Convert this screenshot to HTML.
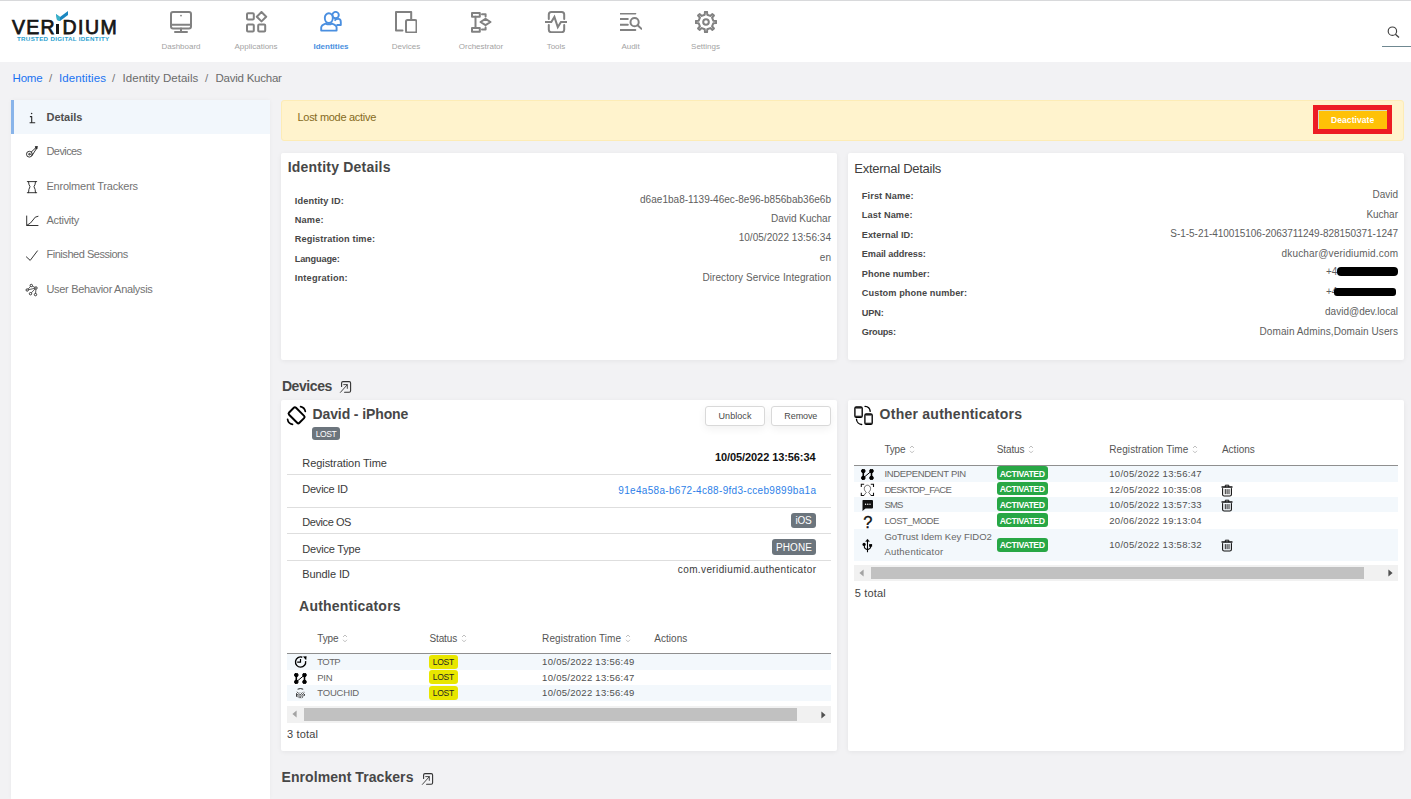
<!DOCTYPE html>
<html><head><meta charset="utf-8"><style>
*{margin:0;padding:0;box-sizing:border-box}
html,body{width:1411px;height:799px;overflow:hidden}
body{position:relative;background:#f2f2f4;font-family:"Liberation Sans", sans-serif}
.a{position:absolute}
.t{white-space:nowrap}
</style></head><body>
<div class="a" style="left:0px;top:0px;width:1411px;height:62px;background:#fff;"></div>
<div class="a" style="left:0px;top:0px;width:1411px;height:1px;background:#d8d9db;"></div>
<div id="t0" class="a t" style="top:18.49px;font-size:19.5px;line-height:19.5px;font-weight:400;color:#161616;left:12px;letter-spacing:1.3px;-webkit-text-stroke:0.75px #161616;">VER</div>
<div class="a" style="left:56.2px;top:23.5px;width:2.6px;height:10.5px;background:#161616"></div>
<div id="t1" class="a t" style="top:18.49px;font-size:19.5px;line-height:19.5px;font-weight:400;color:#161616;left:62.5px;letter-spacing:1.5px;-webkit-text-stroke:0.75px #161616;">DIUM</div>
<svg class="a" style="left:55px;top:11px;" width="14" height="11" viewBox="0 0 14 11"><path d="M1 3 L2 9 L5 10 L13 4 L13 0 L5 6 Z" fill="#1a86c0"/><path d="M1 3 L5 6 L5 10 L2 9Z" fill="#3ab2c8"/></svg>
<div id="t2" class="a t" style="top:35.75px;font-size:6.2px;line-height:6.2px;font-weight:700;color:#2a9fd0;letter-spacing:0.311px;left:17px;">TRUSTED DIGITAL IDENTITY</div>
<div id="t3" class="a t" style="top:42.73px;font-size:8px;line-height:8px;font-weight:400;color:#a3a3a3;left:181px;transform:translateX(-50%);">Dashboard</div>
<div id="t4" class="a t" style="top:42.73px;font-size:8px;line-height:8px;font-weight:400;color:#a3a3a3;left:256px;transform:translateX(-50%);">Applications</div>
<div id="t5" class="a t" style="top:42.73px;font-size:8px;line-height:8px;font-weight:700;color:#4a8fe0;left:331px;transform:translateX(-50%);">Identities</div>
<div id="t6" class="a t" style="top:42.73px;font-size:8px;line-height:8px;font-weight:400;color:#a3a3a3;left:406px;transform:translateX(-50%);">Devices</div>
<div id="t7" class="a t" style="top:42.73px;font-size:8px;line-height:8px;font-weight:400;color:#a3a3a3;left:481px;transform:translateX(-50%);">Orchestrator</div>
<div id="t8" class="a t" style="top:42.73px;font-size:8px;line-height:8px;font-weight:400;color:#a3a3a3;left:556px;transform:translateX(-50%);">Tools</div>
<div id="t9" class="a t" style="top:42.73px;font-size:8px;line-height:8px;font-weight:400;color:#a3a3a3;left:630.5px;transform:translateX(-50%);">Audit</div>
<div id="t10" class="a t" style="top:42.73px;font-size:8px;line-height:8px;font-weight:400;color:#a3a3a3;left:705.5px;transform:translateX(-50%);">Settings</div>
<svg class="a" style="left:170px;top:11px;" width="22" height="22" viewBox="0 0 22 22"><g fill="none" stroke="#818181" stroke-width="2" stroke-linecap="round" stroke-linejoin="round"><rect x="1" y="1" width="20" height="16.5" rx="2"/><path d="M1 13.8H21M11 17.5V20.5M5 21H17"/></g><circle cx="11" cy="4.6" r="0.9" fill="#818181"/></svg>
<svg class="a" style="left:246px;top:11px;" width="22" height="22" viewBox="0 0 22 22"><g fill="none" stroke="#818181" stroke-width="2" stroke-linecap="round" stroke-linejoin="round"><rect x="1" y="2.2" width="6.8" height="6.4" rx="1"/><rect x="1" y="13.4" width="6.8" height="7.2" rx="1"/><rect x="12.2" y="13.4" width="7" height="7.2" rx="1"/><path d="M15.5 1 L20.2 5.7 L15.5 10.4 L10.8 5.7Z"/></g></svg>
<svg class="a" style="left:320px;top:11px;" width="22" height="22" viewBox="0 0 22 22"><g fill="#fff" stroke="#4a8fe0" stroke-width="1.9" stroke-linejoin="round"><circle cx="15.6" cy="4.1" r="3.2"/><path d="M14.5 9.6 C15.5 8.4 17 7.9 18.3 7.9 C20 7.9 20.8 9.3 20.8 11 V14 H16.5"/><ellipse cx="8.8" cy="7.1" rx="4" ry="4.9"/><path d="M1.2 19.6 V16.6 C1.2 14.6 3.2 13.4 5.6 12.6 Q8.8 14.2 12 12.6 C14.6 13.4 16.6 14.6 16.6 16.6 V19.6 Z"/></g></svg>
<svg class="a" style="left:395px;top:11px;" width="22" height="22" viewBox="0 0 22 22"><g fill="none" stroke="#818181" stroke-width="2" stroke-linecap="round" stroke-linejoin="round" stroke-linecap="butt" stroke-width="1.9"><path d="M7.5 19.5 H1 V1 H16.2 V8.3"/><rect x="11" y="9" width="10.5" height="12.5" rx="1.5"/></g></svg>
<svg class="a" style="left:471px;top:12px;" width="22" height="22" viewBox="0 0 22 22"><g fill="none" stroke="#818181" stroke-width="2" stroke-linecap="round" stroke-linejoin="round" stroke-width="1.8" stroke-linecap="butt" stroke-linejoin="miter"><rect x="1" y="1" width="7.8" height="3.8"/><rect x="1" y="16" width="7.8" height="3.8"/><path d="M4.5 4.8V16M9.5 10 L14.5 6.8 L19.5 10 L14.5 13.2Z M11 2.3H14.6V4.6 M14.6 15.4V17.6H11"/></g></svg>
<svg class="a" style="left:545px;top:11px;" width="22" height="22" viewBox="0 0 22 22"><g fill="none" stroke="#818181" stroke-width="2" stroke-linecap="round" stroke-linejoin="round" stroke-width="1.9" stroke-linecap="butt"><path d="M3.8 8 V3.5 Q3.8 1 6.3 1 H16.7 Q19.2 1 19.2 3.5 V8 M3.8 14 V18.8 Q3.8 21.2 6.3 21.2 H16.7 Q19.2 21.2 19.2 18.8 V14"/><path d="M0 11 H6.3 L9.4 5.9 L12.8 16.1 L16 11 H22" stroke-linejoin="miter"/></g></svg>
<svg class="a" style="left:620px;top:13px;" width="22" height="20" viewBox="0 0 22 20"><g fill="none" stroke="#818181" stroke-width="2" stroke-linecap="round" stroke-linejoin="round" stroke-width="1.8" stroke-linecap="butt"><path d="M0 0.6H15.3M0 6H7.8M0 11.7H7.8M0 17.1H15.3"/><circle cx="14.6" cy="9.2" r="4.1"/><path d="M17.6 12.2 L21.5 15.8"/></g></svg>
<svg class="a" style="left:695px;top:11px;" width="22" height="22" viewBox="0 0 22 22"><g fill="none" stroke="#818181" stroke-width="2" stroke-linecap="round" stroke-linejoin="round" stroke-width="1.65" stroke-linejoin="round"><path d="M18.29 9.73 L21.15 9.96 L21.15 12.04 L18.29 12.27 L17.05 15.26 L18.91 17.44 L17.44 18.91 L15.26 17.05 L12.27 18.29 L12.04 21.15 L9.96 21.15 L9.73 18.29 L6.74 17.05 L4.56 18.91 L3.09 17.44 L4.95 15.26 L3.71 12.27 L0.85 12.04 L0.85 9.96 L3.71 9.73 L4.95 6.74 L3.09 4.56 L4.56 3.09 L6.74 4.95 L9.73 3.71 L9.96 0.85 L12.04 0.85 L12.27 3.71 L15.26 4.95 L17.44 3.09 L18.91 4.56 L17.05 6.74Z"/><circle cx="11" cy="11" r="2.8"/></g></svg>
<svg class="a" style="left:1386px;top:25px;" width="15" height="14" viewBox="0 0 15 14"><g fill="none" stroke="#404040" stroke-width="1.15"><circle cx="6.4" cy="6.2" r="4.2"/><path d="M9.4 9.3 L13 12.6" stroke-width="1.3"/></g></svg>
<div class="a" style="left:1382px;top:46px;width:29px;height:1.2px;background:#6f8891;"></div>
<div id="t11" class="a t" style="top:73.27px;font-size:11.5px;line-height:11.5px;font-weight:400;color:#1a72f2;letter-spacing:-0.172px;left:12.5px;">Home</div>
<div id="t12" class="a t" style="top:73.27px;font-size:11.5px;line-height:11.5px;font-weight:400;color:#777;left:49px;">/</div>
<div id="t13" class="a t" style="top:73.27px;font-size:11.5px;line-height:11.5px;font-weight:400;color:#1a72f2;letter-spacing:0.097px;left:59px;">Identities</div>
<div id="t14" class="a t" style="top:73.27px;font-size:11.5px;line-height:11.5px;font-weight:400;color:#777;left:112px;">/</div>
<div id="t15" class="a t" style="top:73.27px;font-size:11.5px;line-height:11.5px;font-weight:400;color:#6b6b6b;letter-spacing:0.016px;left:122.6px;">Identity Details</div>
<div id="t16" class="a t" style="top:73.27px;font-size:11.5px;line-height:11.5px;font-weight:400;color:#777;left:205px;">/</div>
<div id="t17" class="a t" style="top:73.27px;font-size:11.5px;line-height:11.5px;font-weight:400;color:#6b6b6b;letter-spacing:-0.237px;left:215.5px;">David Kuchar</div>
<div class="a" style="left:11px;top:100px;width:259px;height:699px;background:#fff;box-shadow:0 0 4px rgba(0,0,0,0.04);"></div>
<div class="a" style="left:11px;top:100px;width:259px;height:34px;background:#f2f7fc;"></div>
<div class="a" style="left:11px;top:100px;width:3px;height:34px;background:#88b4ea;"></div>
<div id="t18" class="a t" style="top:111.79px;font-size:11px;line-height:11px;font-weight:700;color:#4f4f4f;letter-spacing:-0.054px;left:46.5px;">Details</div>
<div id="t19" class="a t" style="top:145.89px;font-size:11px;line-height:11px;font-weight:400;color:#737373;letter-spacing:-0.589px;left:46.5px;">Devices</div>
<div id="t20" class="a t" style="top:180.69px;font-size:11px;line-height:11px;font-weight:400;color:#737373;letter-spacing:-0.221px;left:46.5px;">Enrolment Trackers</div>
<div id="t21" class="a t" style="top:215.09px;font-size:11px;line-height:11px;font-weight:400;color:#737373;letter-spacing:-0.293px;left:46.5px;">Activity</div>
<div id="t22" class="a t" style="top:249.49px;font-size:11px;line-height:11px;font-weight:400;color:#737373;letter-spacing:-0.469px;left:46.5px;">Finished Sessions</div>
<div id="t23" class="a t" style="top:283.69px;font-size:11px;line-height:11px;font-weight:400;color:#737373;letter-spacing:-0.323px;left:46.5px;">User Behavior Analysis</div>
<svg class="a" style="left:0px;top:0px;" width="45" height="300" viewBox="0 0 45 300"><g fill="none" stroke="#2a2a2a" stroke-width="0.95" stroke-linecap="round" stroke-linejoin="round">
<path d="M29.9 116.6 H31.7 V122.6 M29.6 122.7 H35.2" stroke-width="1.1" stroke-linecap="butt"/>
<circle cx="29.4" cy="154.2" r="2.9"/><circle cx="29.4" cy="154.2" r="0.8"/>
<path d="M31.3 152 L35.2 148.3 M32 155.6 L35.9 149.5"/>
<path d="M27.3 181.6 H36.7 M27.3 192.7 H36.7 M28.5 181.6 Q28.5 184.5 30 186.7 Q28.5 189 28.5 192.7 M35.5 181.6 Q35.5 184.5 34 186.7 Q35.5 189 35.5 192.7"/>
<path d="M26.7 216 V225.5 H38 M26.9 225.3 Q31 223.5 33 220 Q34.8 216.2 38 216.2"/>
<path d="M26.4 256.9 L30.2 260.4 L37.4 250.9"/>
<path d="M27.3 290 L36 288 M31.3 285.5 L36 288 M30.5 293.7 L36 288 M35.5 294.6 L36 288 M27.3 290 L31.3 285.5" stroke-width="0.75"/>
</g>
<circle cx="31.6" cy="113.4" r="0.75" fill="#2a2a2a"/>
<path d="M34.8 146.2 L37.8 146.1 L37.4 149 L35.6 149.6Z" fill="#2a2a2a"/>
<g fill="#fff" stroke="#2a2a2a" stroke-width="0.9"><circle cx="31.3" cy="285.5" r="1.2"/><circle cx="27.2" cy="290" r="1.2"/><circle cx="30.5" cy="293.7" r="1.2"/><circle cx="36" cy="288" r="1.2"/><circle cx="35.5" cy="294.6" r="1.2"/></g></svg>
<div class="a" style="left:281px;top:100px;width:1123px;height:40.5px;background:#fff3cd;border:1px solid #fdecb6;border-radius:3px;"></div>
<div id="t24" class="a t" style="top:111.69px;font-size:11px;line-height:11px;font-weight:400;color:#856a1c;letter-spacing:-0.291px;left:297.5px;">Lost mode active</div>
<div class="a" style="left:1313px;top:105px;width:79px;height:29px;background:#ed1c24;"></div>
<div class="a" style="left:1318px;top:110px;width:69px;height:19px;background:#ffc107;border-top:1px solid #d8d8c8;border-left:1px solid #d8d8c8;"></div>
<div id="t25" class="a t" style="top:115.80px;font-size:8.5px;line-height:8.5px;font-weight:700;color:#fff;letter-spacing:0.077px;left:1352.7px;transform:translateX(-50%);">Deactivate</div>
<div class="a" style="left:281px;top:153px;width:556px;height:207px;background:#fff;border-radius:2px;box-shadow:0 1px 5px rgba(0,0,0,0.06);"></div>
<div class="a" style="left:848px;top:153px;width:556px;height:207px;background:#fff;border-radius:2px;box-shadow:0 1px 5px rgba(0,0,0,0.06);"></div>
<div id="t26" class="a t" style="top:160.15px;font-size:14px;line-height:14px;font-weight:700;color:#474747;letter-spacing:0.213px;left:287.7px;">Identity Details</div>
<div id="t27" class="a t" style="top:196.61px;font-size:9.2px;line-height:9.2px;font-weight:700;color:#474747;letter-spacing:0.153px;left:294.7px;">Identity ID:</div>
<div id="t28" class="a t" style="top:216.31px;font-size:9.2px;line-height:9.2px;font-weight:700;color:#474747;letter-spacing:0.221px;left:294.7px;">Name:</div>
<div id="t29" class="a t" style="top:235.11px;font-size:9.2px;line-height:9.2px;font-weight:700;color:#474747;letter-spacing:0.127px;left:294.7px;">Registration time:</div>
<div id="t30" class="a t" style="top:255.31px;font-size:9.2px;line-height:9.2px;font-weight:700;color:#474747;letter-spacing:-0.161px;left:294.7px;">Language:</div>
<div id="t31" class="a t" style="top:274.11px;font-size:9.2px;line-height:9.2px;font-weight:700;color:#474747;letter-spacing:0.222px;left:294.7px;">Integration:</div>
<div id="t32" class="a t" style="top:194.53px;font-size:10px;line-height:10px;font-weight:400;color:#5e5e5e;letter-spacing:0.028px;right:579.97px;">d6ae1ba8-1139-46ec-8e96-b856bab36e6b</div>
<div id="t33" class="a t" style="top:213.53px;font-size:10px;line-height:10px;font-weight:400;color:#5e5e5e;letter-spacing:-0.003px;right:580.00px;">David Kuchar</div>
<div id="t34" class="a t" style="top:233.34px;font-size:10px;line-height:10px;font-weight:400;color:#5e5e5e;letter-spacing:0.033px;right:579.97px;">10/05/2022 13:56:34</div>
<div id="t35" class="a t" style="top:252.53px;font-size:10px;line-height:10px;font-weight:400;color:#5e5e5e;letter-spacing:0.088px;right:579.91px;">en</div>
<div id="t36" class="a t" style="top:272.54px;font-size:10px;line-height:10px;font-weight:400;color:#5e5e5e;letter-spacing:0.087px;right:579.91px;">Directory Service Integration</div>
<div id="t37" class="a t" style="top:161.50px;font-size:13px;line-height:13px;font-weight:400;color:#404040;letter-spacing:-0.272px;left:854.3px;">External Details</div>
<div id="t38" class="a t" style="top:192.31px;font-size:9.2px;line-height:9.2px;font-weight:700;color:#474747;letter-spacing:0.114px;left:861.8px;">First Name:</div>
<div id="t39" class="a t" style="top:211.11px;font-size:9.2px;line-height:9.2px;font-weight:700;color:#474747;letter-spacing:0.127px;left:861.8px;">Last Name:</div>
<div id="t40" class="a t" style="top:231.11px;font-size:9.2px;line-height:9.2px;font-weight:700;color:#474747;letter-spacing:0.045px;left:861.8px;">External ID:</div>
<div id="t41" class="a t" style="top:250.11px;font-size:9.2px;line-height:9.2px;font-weight:700;color:#474747;letter-spacing:-0.098px;left:861.8px;">Email address:</div>
<div id="t42" class="a t" style="top:270.11px;font-size:9.2px;line-height:9.2px;font-weight:700;color:#474747;letter-spacing:0.047px;left:861.8px;">Phone number:</div>
<div id="t43" class="a t" style="top:289.31px;font-size:9.2px;line-height:9.2px;font-weight:700;color:#474747;letter-spacing:0.089px;left:861.8px;">Custom phone number:</div>
<div id="t44" class="a t" style="top:308.81px;font-size:9.2px;line-height:9.2px;font-weight:700;color:#474747;letter-spacing:-0.117px;left:861.8px;">UPN:</div>
<div id="t45" class="a t" style="top:328.11px;font-size:9.2px;line-height:9.2px;font-weight:700;color:#474747;letter-spacing:-0.248px;left:861.8px;">Groups:</div>
<div id="t46" class="a t" style="top:189.53px;font-size:10px;line-height:10px;font-weight:400;color:#5e5e5e;letter-spacing:0.004px;right:13.00px;">David</div>
<div id="t47" class="a t" style="top:209.53px;font-size:10px;line-height:10px;font-weight:400;color:#5e5e5e;letter-spacing:-0.015px;right:13.01px;">Kuchar</div>
<div id="t48" class="a t" style="top:228.94px;font-size:10px;line-height:10px;font-weight:400;color:#5e5e5e;letter-spacing:-0.042px;right:13.04px;">S-1-5-21-410015106-2063711249-828150371-1247</div>
<div id="t49" class="a t" style="top:248.53px;font-size:10px;line-height:10px;font-weight:400;color:#5e5e5e;letter-spacing:0.165px;right:12.83px;">dkuchar@veridiumid.com</div>
<div id="t50" class="a t" style="top:306.54px;font-size:10px;line-height:10px;font-weight:400;color:#5e5e5e;letter-spacing:0.014px;right:12.99px;">david@dev.local</div>
<div id="t51" class="a t" style="top:326.54px;font-size:10px;line-height:10px;font-weight:400;color:#5e5e5e;letter-spacing:0.093px;right:12.91px;">Domain Admins,Domain Users</div>
<div id="t52" class="a t" style="top:266.54px;font-size:10px;line-height:10px;font-weight:400;color:#5e5e5e;left:1326px;">+4</div>
<div id="t53" class="a t" style="top:287.14px;font-size:10px;line-height:10px;font-weight:400;color:#5e5e5e;left:1326px;">+4</div>
<div class="a" style="left:1337px;top:267.4px;width:61px;height:8.6px;background:#000;border-radius:4px;"></div>
<div class="a" style="left:1334px;top:288.4px;width:62px;height:8px;background:#000;border-radius:3px;"></div>
<div id="t54" class="a t" style="top:378.75px;font-size:14px;line-height:14px;font-weight:700;color:#474747;letter-spacing:-0.420px;left:281.9px;">Devices</div>
<svg class="a" style="left:335px;top:376px;" width="20" height="20" viewBox="0 0 20 20"><g fill="none" stroke="#333" stroke-linecap="round"><path d="M6.6 10.4 V7 Q6.6 5.6 8 5.6 H14.2 Q15.6 5.6 15.6 7 V14.8 Q15.6 16.2 14.2 16.2 H9.6" stroke-width="1.1"/><path d="M5.4 16.4 L12.2 8.8 M8.7 8.6 H12.3 V12.4" stroke-width="0.9"/></g></svg>
<div id="t55" class="a t" style="top:769.75px;font-size:14px;line-height:14px;font-weight:700;color:#474747;letter-spacing:0.070px;left:281.5px;">Enrolment Trackers</div>
<svg class="a" style="left:417px;top:768px;" width="20" height="20" viewBox="0 0 20 20"><g fill="none" stroke="#333" stroke-linecap="round"><path d="M6.6 10.4 V7 Q6.6 5.6 8 5.6 H14.2 Q15.6 5.6 15.6 7 V14.8 Q15.6 16.2 14.2 16.2 H9.6" stroke-width="1.1"/><path d="M5.4 16.4 L12.2 8.8 M8.7 8.6 H12.3 V12.4" stroke-width="0.9"/></g></svg>
<div class="a" style="left:281px;top:400px;width:556px;height:351px;background:#fff;border-radius:2px;box-shadow:0 1px 5px rgba(0,0,0,0.06);"></div>
<svg class="a" style="left:284px;top:402px;" width="26" height="26" viewBox="0 0 26 26"><g fill="none" stroke="#000" stroke-width="1.7" stroke-linecap="round"><rect x="-4.9" y="-7.3" width="9.8" height="14.6" rx="1.6" stroke-width="1.95" transform="translate(12.6 13.3) rotate(-45)"/><path d="M16.6 4.6 A6 6 0 0 1 21.3 9.4"/><path d="M3.6 17.3 A6 6 0 0 0 8.5 22.3"/></g></svg>
<div id="t56" class="a t" style="top:406.85px;font-size:14px;line-height:14px;font-weight:700;color:#474747;letter-spacing:-0.110px;left:312.5px;">David - iPhone</div>
<div class="a" style="left:312.2px;top:427.2px;width:27.5px;height:12.7px;background:#6c757d;border-radius:3px;"></div>
<div id="t57" class="a t" style="top:430.00px;font-size:8.5px;line-height:8.5px;font-weight:400;color:#fff;letter-spacing:-0.401px;left:326px;transform:translateX(-50%);">LOST</div>
<div class="a" style="left:705.3px;top:406.3px;width:59.3px;height:20.2px;background:#fff;border:1px solid #d9d9d9;border-radius:3px;box-shadow:0 3px 8px rgba(0,0,0,0.06);"></div>
<div class="a" style="left:771px;top:406.3px;width:59.6px;height:20.2px;background:#fff;border:1px solid #d9d9d9;border-radius:3px;box-shadow:0 3px 8px rgba(0,0,0,0.06);"></div>
<div id="t58" class="a t" style="top:412.38px;font-size:9px;line-height:9px;font-weight:400;color:#4a4a4a;letter-spacing:0.069px;left:735px;transform:translateX(-50%);">Unblock</div>
<div id="t59" class="a t" style="top:412.38px;font-size:9px;line-height:9px;font-weight:400;color:#4a4a4a;letter-spacing:-0.086px;left:800.8px;transform:translateX(-50%);">Remove</div>
<div id="t60" class="a t" style="top:457.59px;font-size:11px;line-height:11px;font-weight:400;color:#3a3a3a;letter-spacing:-0.064px;left:302.3px;">Registration Time</div>
<div id="t61" class="a t" style="top:483.79px;font-size:11px;line-height:11px;font-weight:400;color:#3a3a3a;letter-spacing:-0.243px;left:302.3px;">Device ID</div>
<div id="t62" class="a t" style="top:516.89px;font-size:11px;line-height:11px;font-weight:400;color:#3a3a3a;letter-spacing:-0.431px;left:302.3px;">Device OS</div>
<div id="t63" class="a t" style="top:543.69px;font-size:11px;line-height:11px;font-weight:400;color:#3a3a3a;letter-spacing:-0.212px;left:302.3px;">Device Type</div>
<div id="t64" class="a t" style="top:569.49px;font-size:11px;line-height:11px;font-weight:400;color:#3a3a3a;letter-spacing:-0.101px;left:302.3px;">Bundle ID</div>
<div class="a" style="left:287px;top:474.1px;width:544px;height:1px;background:#dedede;"></div>
<div class="a" style="left:287px;top:507px;width:544px;height:1px;background:#dedede;"></div>
<div class="a" style="left:287px;top:533.3px;width:544px;height:1px;background:#dedede;"></div>
<div class="a" style="left:287px;top:559.9px;width:544px;height:1px;background:#dedede;"></div>
<div id="t65" class="a t" style="top:451.99px;font-size:11px;line-height:11px;font-weight:700;color:#111;letter-spacing:-0.082px;right:595.48px;font-family:"Liberation Sans",sans-serif;">10/05/2022 13:56:34</div>
<div id="t66" class="a t" style="top:485.74px;font-size:10px;line-height:10px;font-weight:400;color:#2e7fe8;letter-spacing:0.310px;right:594.69px;">91e4a58a-b672-4c88-9fd3-cceb9899ba1a</div>
<div class="a" style="left:790.8px;top:513.3px;width:25.2px;height:14.4px;background:#6c757d;border-radius:3px;"></div>
<div id="t67" class="a t" style="top:516.03px;font-size:10px;line-height:10px;font-weight:400;color:#fff;letter-spacing:-0.224px;left:803.4px;transform:translateX(-50%);">iOS</div>
<div class="a" style="left:772px;top:539.3px;width:44px;height:15.7px;background:#6c757d;border-radius:3px;"></div>
<div id="t68" class="a t" style="top:542.53px;font-size:10px;line-height:10px;font-weight:400;color:#fff;letter-spacing:0.087px;left:794px;transform:translateX(-50%);">PHONE</div>
<div id="t69" class="a t" style="top:565.13px;font-size:10px;line-height:10px;font-weight:400;color:#3a3a3a;letter-spacing:0.384px;right:594.62px;">com.veridiumid.authenticator</div>
<div id="t70" class="a t" style="top:599.15px;font-size:14px;line-height:14px;font-weight:700;color:#474747;letter-spacing:0.207px;left:299.1px;">Authenticators</div>
<div id="t71" class="a t" style="top:633.53px;font-size:10px;line-height:10px;font-weight:400;color:#555;letter-spacing:-0.172px;left:317.3px;">Type</div>
<svg class="a" style="left:341.8px;top:633.5px;" width="6" height="9" viewBox="0 0 6 9"><g fill="none" stroke="#b3b3b3" stroke-width="0.85"><path d="M1 3 L3 1 L5 3 M1 5.8 L3 7.8 L5 5.8"/></g></svg>
<div id="t72" class="a t" style="top:633.53px;font-size:10px;line-height:10px;font-weight:400;color:#555;letter-spacing:-0.143px;left:429.5px;">Status</div>
<svg class="a" style="left:460.5px;top:633.5px;" width="6" height="9" viewBox="0 0 6 9"><g fill="none" stroke="#b3b3b3" stroke-width="0.85"><path d="M1 3 L3 1 L5 3 M1 5.8 L3 7.8 L5 5.8"/></g></svg>
<div id="t73" class="a t" style="top:633.53px;font-size:10px;line-height:10px;font-weight:400;color:#555;letter-spacing:0.070px;left:542.1px;">Registration Time</div>
<svg class="a" style="left:624.6px;top:633.5px;" width="6" height="9" viewBox="0 0 6 9"><g fill="none" stroke="#b3b3b3" stroke-width="0.85"><path d="M1 3 L3 1 L5 3 M1 5.8 L3 7.8 L5 5.8"/></g></svg>
<div id="t74" class="a t" style="top:633.53px;font-size:10px;line-height:10px;font-weight:400;color:#555;letter-spacing:0.029px;left:654.3px;">Actions</div>
<div class="a" style="left:287px;top:652.7px;width:544px;height:1.3px;background:#8f8f8f;"></div>
<div class="a" style="left:287px;top:654px;width:544px;height:15.5px;background:#f3f8fc"></div>
<div class="a" style="left:287px;top:685px;width:544px;height:15.5px;background:#f3f8fc"></div>
<div id="t75" class="a t" style="top:656.86px;font-size:9.5px;line-height:9.5px;font-weight:400;color:#676767;letter-spacing:-0.593px;left:317.3px;">TOTP</div>
<div id="t76" class="a t" style="top:656.86px;font-size:9.5px;line-height:9.5px;font-weight:400;color:#505050;letter-spacing:0.280px;left:542.1px;">10/05/2022 13:56:49</div>
<div id="t77" class="a t" style="top:672.66px;font-size:9.5px;line-height:9.5px;font-weight:400;color:#676767;letter-spacing:-0.281px;left:317.3px;">PIN</div>
<div id="t78" class="a t" style="top:672.66px;font-size:9.5px;line-height:9.5px;font-weight:400;color:#505050;letter-spacing:0.280px;left:542.1px;">10/05/2022 13:56:47</div>
<div id="t79" class="a t" style="top:687.56px;font-size:9.5px;line-height:9.5px;font-weight:400;color:#676767;letter-spacing:-0.201px;left:317.3px;">TOUCHID</div>
<div id="t80" class="a t" style="top:687.56px;font-size:9.5px;line-height:9.5px;font-weight:400;color:#505050;letter-spacing:0.280px;left:542.1px;">10/05/2022 13:56:49</div>
<div class="a" style="left:429px;top:655px;width:29px;height:13.5px;background:#e8e600;border-radius:3px;"></div>
<div id="t81" class="a t" style="top:657.60px;font-size:8.5px;line-height:8.5px;font-weight:400;color:#222;letter-spacing:-0.301px;left:443.3px;transform:translateX(-50%);">LOST</div>
<div class="a" style="left:429px;top:670.2px;width:29px;height:13.5px;background:#e8e600;border-radius:3px;"></div>
<div id="t82" class="a t" style="top:672.80px;font-size:8.5px;line-height:8.5px;font-weight:400;color:#222;letter-spacing:-0.301px;left:443.3px;transform:translateX(-50%);">LOST</div>
<div class="a" style="left:429px;top:686px;width:29px;height:13.5px;background:#e8e600;border-radius:3px;"></div>
<div id="t83" class="a t" style="top:688.60px;font-size:8.5px;line-height:8.5px;font-weight:400;color:#222;letter-spacing:-0.301px;left:443.3px;transform:translateX(-50%);">LOST</div>
<svg class="a" style="left:290px;top:652px;" width="22" height="18" viewBox="0 0 22 18"><g fill="none" stroke="#000" stroke-width="1.35"><path d="M12.3 5.25 A5.1 5.1 0 1 0 15.6 9.1"/><path d="M10.5 6.9 V10.2 H7.2" stroke-width="1.2"/></g><path d="M13.0 4.6 L16.6 4.3 L16.2 8.3 Z" fill="#000"/></svg>
<svg class="a" style="left:294px;top:672.6px;" width="13" height="11" viewBox="0 0 13 11"><g stroke="#000" fill="#000"><path d="M2.3 2 V8.9 M10.5 2 V8.9" stroke-width="1.6"/><path d="M2.3 8.9 L10.5 2" stroke-width="1"/><circle cx="2.3" cy="2" r="1.8"/><circle cx="10.5" cy="2" r="1.8"/><circle cx="2.3" cy="8.9" r="1.8"/><circle cx="10.5" cy="8.9" r="1.8"/></g></svg>
<svg class="a" style="left:295px;top:687px;" width="11" height="12" viewBox="0 0 11 12"><defs><pattern id="hp" width="2.4" height="2.4" patternUnits="userSpaceOnUse" x="0.3" y="0.5"><path d="M0 0 L2.4 2.4 M2.4 0 L0 2.4" stroke="#222" stroke-width="0.55"/></pattern></defs><path d="M1.6 4.2 Q5.4 7.5 9.2 4.2 L9.6 6.5 Q9.5 9.5 7.5 11 L5.4 11.5 L3.3 11 Q1.3 9.5 1.2 6.5Z" fill="url(#hp)"/><path d="M2.6 2.2 Q5.4 0.9 8.2 2.2" stroke="#222" fill="none" stroke-width="1"/><path d="M1.5 7 V9.8 M9.4 7 V8.8" stroke="#111" stroke-width="0.8"/></svg>
<div class="a" style="left:287px;top:706px;width:544px;height:16.7px;background:#f1f1f1;"></div>
<div class="a" style="left:304px;top:708px;width:493px;height:12.8px;background:#c1c1c1;"></div>
<svg class="a" style="left:291.5px;top:710px;" width="6" height="8" viewBox="0 0 6 8"><path d="M4.6 0.4 L0.4 3.9 L4.6 7.4Z" fill="#a3a3a3"/></svg>
<svg class="a" style="left:820.5px;top:710.5px;" width="6" height="8" viewBox="0 0 6 8"><path d="M0.4 0.4 L4.6 3.9 L0.4 7.4Z" fill="#505050"/></svg>
<div id="t84" class="a t" style="top:728.69px;font-size:11px;line-height:11px;font-weight:400;color:#444;letter-spacing:0.162px;left:287px;">3 total</div>
<div class="a" style="left:848px;top:400px;width:556px;height:351px;background:#fff;border-radius:2px;box-shadow:0 1px 5px rgba(0,0,0,0.06);"></div>
<svg class="a" style="left:851px;top:402px;" width="26" height="26" viewBox="0 0 26 26"><g fill="none" stroke="#000" stroke-width="1.35" stroke-linecap="round"><rect x="3.9" y="4.9" width="7.3" height="10.4" rx="1.3"/><rect x="13.9" y="11.9" width="7.3" height="10.4" rx="1.3"/><path d="M14 4.4 A5.5 5.5 0 0 1 19.2 9.4"/><path d="M5.5 17.3 A5.5 5.5 0 0 0 10.7 22.5"/></g><path d="M4.5 5.9H10.6M4.5 14.2H10.6M14.5 12.9H20.6M14.5 21.2H20.6" stroke="#000" stroke-width="1.1"/></svg>
<div id="t85" class="a t" style="top:406.95px;font-size:14px;line-height:14px;font-weight:700;color:#474747;letter-spacing:0.250px;left:879.6px;">Other authenticators</div>
<div id="t86" class="a t" style="top:445.34px;font-size:10px;line-height:10px;font-weight:400;color:#555;letter-spacing:-0.172px;left:884.4px;">Type</div>
<svg class="a" style="left:908.9px;top:445.3px;" width="6" height="9" viewBox="0 0 6 9"><g fill="none" stroke="#b3b3b3" stroke-width="0.85"><path d="M1 3 L3 1 L5 3 M1 5.8 L3 7.8 L5 5.8"/></g></svg>
<div id="t87" class="a t" style="top:445.34px;font-size:10px;line-height:10px;font-weight:400;color:#555;letter-spacing:-0.143px;left:996.8px;">Status</div>
<svg class="a" style="left:1027.8px;top:445.3px;" width="6" height="9" viewBox="0 0 6 9"><g fill="none" stroke="#b3b3b3" stroke-width="0.85"><path d="M1 3 L3 1 L5 3 M1 5.8 L3 7.8 L5 5.8"/></g></svg>
<div id="t88" class="a t" style="top:445.34px;font-size:10px;line-height:10px;font-weight:400;color:#555;letter-spacing:0.070px;left:1109.3px;">Registration Time</div>
<svg class="a" style="left:1191.8px;top:445.3px;" width="6" height="9" viewBox="0 0 6 9"><g fill="none" stroke="#b3b3b3" stroke-width="0.85"><path d="M1 3 L3 1 L5 3 M1 5.8 L3 7.8 L5 5.8"/></g></svg>
<div id="t89" class="a t" style="top:445.34px;font-size:10px;line-height:10px;font-weight:400;color:#555;letter-spacing:0.029px;left:1221.9px;">Actions</div>
<div class="a" style="left:854px;top:464.7px;width:544px;height:1.3px;background:#8f8f8f;"></div>
<div class="a" style="left:854px;top:466px;width:544px;height:16px;background:#f3f8fc"></div>
<div class="a" style="left:854px;top:497.3px;width:544px;height:15.2px;background:#f3f8fc"></div>
<div class="a" style="left:854px;top:529px;width:544px;height:31.7px;background:#f3f8fc"></div>
<div id="t90" class="a t" style="top:468.96px;font-size:9.5px;line-height:9.5px;font-weight:400;color:#676767;letter-spacing:-0.334px;left:884.4px;">INDEPENDENT PIN</div>
<div class="a" style="left:996.9px;top:466.0px;width:51px;height:13.8px;background:#28a745;border-radius:3px;"></div>
<div id="t91" class="a t" style="top:469.54px;font-size:8.7px;line-height:8.7px;font-weight:700;color:#fff;letter-spacing:-0.380px;left:1022.1999999999999px;transform:translateX(-50%);">ACTIVATED</div>
<div id="t92" class="a t" style="top:468.96px;font-size:9.5px;line-height:9.5px;font-weight:400;color:#505050;letter-spacing:0.280px;left:1109.3px;">10/05/2022 13:56:47</div>
<div id="t93" class="a t" style="top:484.86px;font-size:9.5px;line-height:9.5px;font-weight:400;color:#676767;letter-spacing:-0.719px;left:884.4px;">DESKTOP_FACE</div>
<div class="a" style="left:996.9px;top:481.7px;width:51px;height:13.8px;background:#28a745;border-radius:3px;"></div>
<div id="t94" class="a t" style="top:485.24px;font-size:8.7px;line-height:8.7px;font-weight:700;color:#fff;letter-spacing:-0.380px;left:1022.1999999999999px;transform:translateX(-50%);">ACTIVATED</div>
<div id="t95" class="a t" style="top:484.86px;font-size:9.5px;line-height:9.5px;font-weight:400;color:#505050;letter-spacing:0.280px;left:1109.3px;">12/05/2022 10:35:08</div>
<div id="t96" class="a t" style="top:499.76px;font-size:9.5px;line-height:9.5px;font-weight:400;color:#676767;letter-spacing:-0.765px;left:884.4px;">SMS</div>
<div class="a" style="left:996.9px;top:497.3px;width:51px;height:13.8px;background:#28a745;border-radius:3px;"></div>
<div id="t97" class="a t" style="top:500.84px;font-size:8.7px;line-height:8.7px;font-weight:700;color:#fff;letter-spacing:-0.380px;left:1022.1999999999999px;transform:translateX(-50%);">ACTIVATED</div>
<div id="t98" class="a t" style="top:499.76px;font-size:9.5px;line-height:9.5px;font-weight:400;color:#505050;letter-spacing:0.280px;left:1109.3px;">10/05/2022 13:57:33</div>
<div id="t99" class="a t" style="top:515.86px;font-size:9.5px;line-height:9.5px;font-weight:400;color:#676767;letter-spacing:-0.457px;left:884.4px;">LOST_MODE</div>
<div class="a" style="left:996.9px;top:513.2px;width:51px;height:13.8px;background:#28a745;border-radius:3px;"></div>
<div id="t100" class="a t" style="top:516.74px;font-size:8.7px;line-height:8.7px;font-weight:700;color:#fff;letter-spacing:-0.380px;left:1022.1999999999999px;transform:translateX(-50%);">ACTIVATED</div>
<div id="t101" class="a t" style="top:515.86px;font-size:9.5px;line-height:9.5px;font-weight:400;color:#505050;letter-spacing:0.280px;left:1109.3px;">20/06/2022 19:13:04</div>
<div id="t102" class="a t" style="top:531.96px;font-size:9.5px;line-height:9.5px;font-weight:400;color:#676767;letter-spacing:0.007px;left:884.4px;">GoTrust Idem Key FIDO2</div>
<div id="t103" class="a t" style="top:547.36px;font-size:9.5px;line-height:9.5px;font-weight:400;color:#676767;letter-spacing:0.232px;left:884.4px;">Authenticator</div>
<div class="a" style="left:996.9px;top:537.8px;width:51px;height:13.8px;background:#28a745;border-radius:3px;"></div>
<div id="t104" class="a t" style="top:541.34px;font-size:8.7px;line-height:8.7px;font-weight:700;color:#fff;letter-spacing:-0.380px;left:1022.1999999999999px;transform:translateX(-50%);">ACTIVATED</div>
<div id="t105" class="a t" style="top:539.96px;font-size:9.5px;line-height:9.5px;font-weight:400;color:#505050;letter-spacing:0.280px;left:1109.3px;">10/05/2022 13:58:32</div>
<svg class="a" style="left:1221px;top:483.5px;" width="12" height="13" viewBox="0 0 12 13"><g fill="none" stroke="#111" stroke-linecap="round"><path d="M1 3 H11" stroke-width="1.3"/><path d="M4.3 2.8 V1.2 H7.8 V2.8" stroke-width="1"/><path d="M1.6 4.6 V10.5 Q1.6 12 3.2 12 H8.8 Q10.4 12 10.4 10.5 V4.6" stroke-width="1.1"/><path d="M4.3 5.5V9.8M6.1 5.5V9.8M8 5.5V9.8" stroke-width="0.9"/></g></svg>
<svg class="a" style="left:1221px;top:498.5px;" width="12" height="13" viewBox="0 0 12 13"><g fill="none" stroke="#111" stroke-linecap="round"><path d="M1 3 H11" stroke-width="1.3"/><path d="M4.3 2.8 V1.2 H7.8 V2.8" stroke-width="1"/><path d="M1.6 4.6 V10.5 Q1.6 12 3.2 12 H8.8 Q10.4 12 10.4 10.5 V4.6" stroke-width="1.1"/><path d="M4.3 5.5V9.8M6.1 5.5V9.8M8 5.5V9.8" stroke-width="0.9"/></g></svg>
<svg class="a" style="left:1221px;top:538.5px;" width="12" height="13" viewBox="0 0 12 13"><g fill="none" stroke="#111" stroke-linecap="round"><path d="M1 3 H11" stroke-width="1.3"/><path d="M4.3 2.8 V1.2 H7.8 V2.8" stroke-width="1"/><path d="M1.6 4.6 V10.5 Q1.6 12 3.2 12 H8.8 Q10.4 12 10.4 10.5 V4.6" stroke-width="1.1"/><path d="M4.3 5.5V9.8M6.1 5.5V9.8M8 5.5V9.8" stroke-width="0.9"/></g></svg>
<svg class="a" style="left:861.3px;top:468.5px;" width="13" height="11" viewBox="0 0 13 11"><g stroke="#000" fill="#000"><path d="M2.3 2 V8.9 M10.5 2 V8.9" stroke-width="1.6"/><path d="M2.3 8.9 L10.5 2" stroke-width="1"/><circle cx="2.3" cy="2" r="1.8"/><circle cx="10.5" cy="2" r="1.8"/><circle cx="2.3" cy="8.9" r="1.8"/><circle cx="10.5" cy="8.9" r="1.8"/></g></svg>
<svg class="a" style="left:858px;top:480px;" width="20" height="20" viewBox="0 0 20 20"><g fill="none" stroke="#111" stroke-width="1.1" stroke-linecap="square"><path d="M3.3 6.5 V4.3 H5.6 M13.3 4.3 H15.5 V6.5 M3.3 13.3 V15.5 H5.6 M13.3 15.5 H15.5 V13.3"/></g><g fill="none" stroke="#444" stroke-width="0.8"><path d="M6 15.3 L8.3 12.3 C6.8 11 6.3 9.8 6.3 8.6 C6.3 6.5 7.8 5.2 9.4 5.2 C11 5.2 12.6 6.5 12.6 8.6 C12.6 9.8 12.1 11 10.6 12.3 L13 15.3"/></g></svg>
<svg class="a" style="left:861px;top:499px;" width="13" height="13" viewBox="0 0 13 13"><path d="M2 1 H11 Q12 1 12 2 V8.5 Q12 9.5 11 9.5 H4.5 L1.5 12 V2 Q1.5 1 2 1Z" fill="#111"/><circle cx="4.6" cy="5.3" r="0.7" fill="#fff"/><circle cx="6.8" cy="5.3" r="0.7" fill="#fff"/><circle cx="9" cy="5.3" r="0.7" fill="#fff"/></svg>
<div id="t106" class="a t" style="top:513.83px;font-size:16.5px;line-height:16.5px;font-weight:400;color:#111;left:867.8px;transform:translateX(-50%);-webkit-text-stroke:0.3px #111;">?</div>
<svg class="a" style="left:858px;top:536px;" width="20" height="20" viewBox="0 0 20 20"><g fill="#000" stroke="#000"><path d="M9.5 5 V15.8" stroke-width="1.1" stroke-linecap="round"/><path d="M9.5 2.9 L7.4 5.6 H11.6Z" stroke-width="0.2"/><circle cx="6.1" cy="8.4" r="1.6" stroke-width="0"/><rect x="11.1" y="8.1" width="3" height="2.6" stroke-width="0"/><path d="M6.4 9.5 V11.3 Q6.6 12.6 9.5 13.8 Q12.4 12.6 12.6 11.3 V10" fill="none" stroke-width="1.1"/></g></svg>
<div class="a" style="left:854px;top:564.7px;width:544px;height:16.7px;background:#f1f1f1;"></div>
<div class="a" style="left:870.8px;top:566.7px;width:493.2px;height:12.8px;background:#c1c1c1;"></div>
<svg class="a" style="left:858.5px;top:568.7px;" width="6" height="8" viewBox="0 0 6 8"><path d="M4.6 0.4 L0.4 3.9 L4.6 7.4Z" fill="#a3a3a3"/></svg>
<svg class="a" style="left:1387.5px;top:569.2px;" width="6" height="8" viewBox="0 0 6 8"><path d="M0.4 0.4 L4.6 3.9 L0.4 7.4Z" fill="#505050"/></svg>
<div id="t107" class="a t" style="top:587.99px;font-size:11px;line-height:11px;font-weight:400;color:#444;letter-spacing:0.162px;left:854.7px;">5 total</div>
</body></html>
